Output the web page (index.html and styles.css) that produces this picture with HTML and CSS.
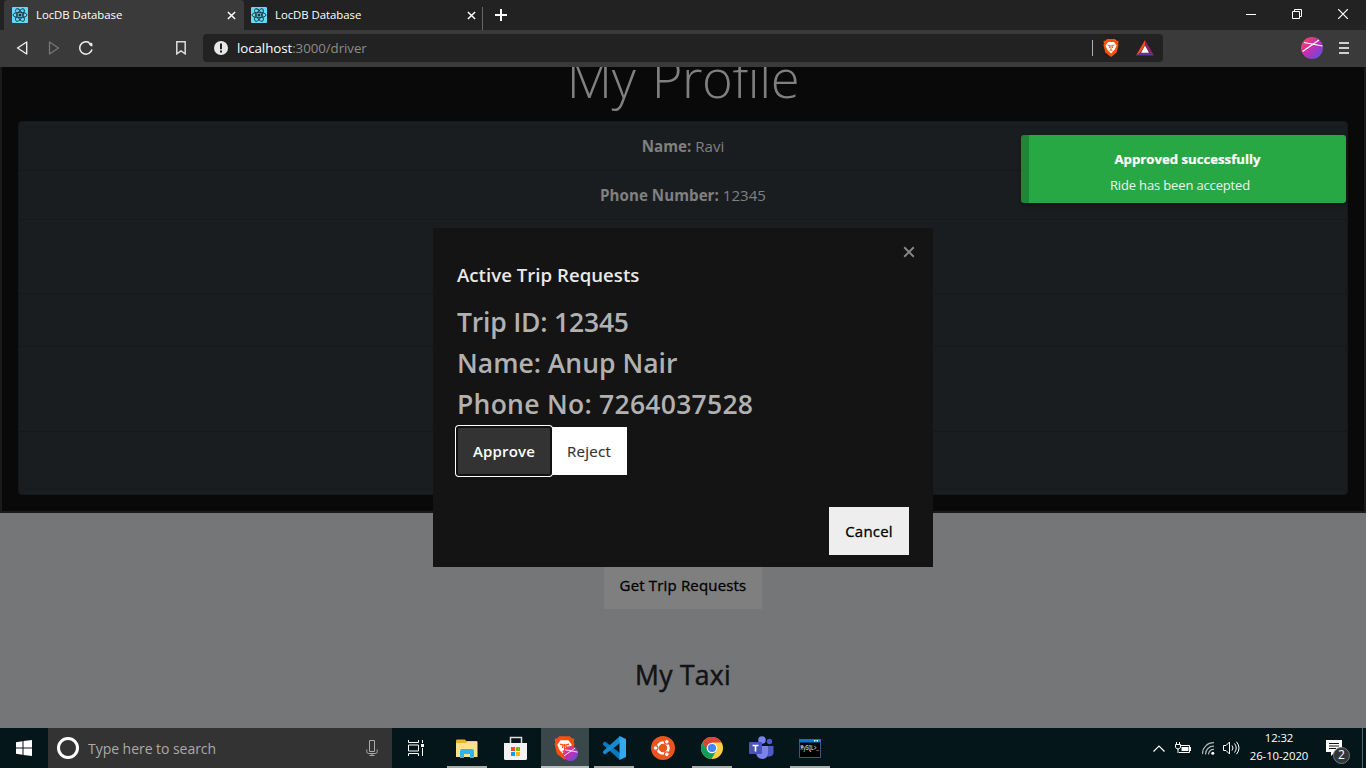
FILE: index.html
```html
<!DOCTYPE html>
<html lang="en">
<head>
<meta charset="utf-8">
<title>LocDB Database</title>
<link rel="stylesheet" href="styles.css">
</head>
<body>
<svg width="0" height="0" class="defs">
  <defs>
    <linearGradient id="orb" x1="0" y1="0" x2="1" y2="1"><stop offset="0" stop-color="#ff4a4a"/><stop offset=".5" stop-color="#c12fb5"/><stop offset="1" stop-color="#4a55e8"/></linearGradient>
    <symbol id="react" viewBox="0 0 16 16"><rect width="16" height="16" rx="1" fill="#61dafb"/><g fill="none" stroke="#20323a" stroke-width=".9"><ellipse cx="8" cy="8" rx="7" ry="2.7"/><ellipse cx="8" cy="8" rx="7" ry="2.7" transform="rotate(60 8 8)"/><ellipse cx="8" cy="8" rx="7" ry="2.7" transform="rotate(120 8 8)"/></g><circle cx="8" cy="8" r="1.5" fill="#20323a"/></symbol>
    <symbol id="x" viewBox="0 0 10 10"><path d="M1 1l8 8M9 1l-8 8" fill="none" stroke="currentColor" stroke-width="1.6"/></symbol>
    <symbol id="lion" viewBox="0 0 16 18"><path d="M4 0h8l1.500 1.500L15.500 2l-.4 3 .5 1-1.900 7.500L8 18l-5.700-4.500L.4 6l.5-1L.5 2l2-.5z" fill="#fb4f0b"/><path d="M5 3h6l2.500 3.500-1.700 4L9.500 13 8 14.500 6.500 13l-2.300-2.500L2.500 6.500z" fill="#fff"/><path d="M4.500 6l2.500.7-.6 2.300M11.500 6L9 6.700l.6 2.300M6.500 11.700L8 11l1.500.7M8 6v5" fill="none" stroke="#fb4f0b" stroke-width=".9"/></symbol>
    <symbol id="orbit" viewBox="0 0 22 22"><circle cx="11" cy="11" r="11" fill="url(#orb)"/><path d="M1.500 14.500L18 3M3 5.500L21.500 9" stroke="#fff" stroke-width="1.200"/></symbol>
  </defs>
</svg>

<header class="browser">
  <div class="tabs">
    <div class="tab tab-active"><svg class="fav"><use href="#react"/></svg><span>LocDB Database</span><svg class="tab-x"><use href="#x"/></svg></div>
    <div class="tab tab-second"><svg class="fav"><use href="#react"/></svg><span>LocDB Database</span><svg class="tab-x"><use href="#x"/></svg></div>
    <svg class="plus" viewBox="0 0 12 12"><path d="M6 0v12M0 6h12" stroke="#fff" stroke-width="2"/></svg>
    <div class="window-buttons">
      <svg viewBox="0 0 10 10"><path d="M0 5.500h10" stroke="#fff"/></svg>
      <svg viewBox="0 0 10 10"><path d="M.5 2.500h7v7h-7zM2.500 2.500v-2h7v7h-2" fill="none" stroke="#fff"/></svg>
      <svg viewBox="0 0 10 10"><path d="M0 0l10 10M10 0L0 10" stroke="#fff" stroke-width="1.200"/></svg>
    </div>
  </div>
  <div class="toolbar">
    <svg class="back" viewBox="0 0 12 14"><path d="M10.700 1v12L1.500 7z" fill="none" stroke="#eee" stroke-width="1.400" stroke-linejoin="round"/></svg>
    <svg class="forward" viewBox="0 0 12 14"><path d="M1.500 1v12L10.500 7z" fill="none" stroke="#777" stroke-width="1.300" stroke-linejoin="round"/></svg>
    <svg class="reload" viewBox="0 0 14 14"><path d="M13 8.500A6.200 6.200 0 1 1 10.300 1.700" fill="none" stroke="#eee" stroke-width="1.500"/><path d="M9 1.500l4.200.5.300 3.500-2.500-.8z" fill="#eee"/></svg>
    <svg class="bookmark" viewBox="0 0 10 14"><path d="M.8.8h8.400v12L5 9.800.8 12.800z" fill="none" stroke="#ddd" stroke-width="1.500"/></svg>
    <div class="address">
      <svg class="info" viewBox="0 0 14 14"><circle cx="7" cy="7" r="7" fill="#e8e8e8"/><path d="M7 2.500v5.700M7 9.600v2" stroke="#222" stroke-width="2"/></svg>
      <span class="url"><b>localhost</b>:3000/driver</span>
      <i class="address-line"></i>
      <svg class="shield"><use href="#lion"/></svg>
      <svg class="bat" viewBox="0 0 18 16"><path d="M9 0L0 15.500l4-2.300L9 5z" fill="#ff4a1c"/><path d="M9 0l9 15.500-4-2.300L9 5z" fill="#962062"/><path d="M0 15.500h18l-4-2.800H4z" fill="#62339b"/><path d="M9 5.500l4 7.200H5z" fill="#fff"/></svg>
    </div>
    <svg class="profile"><use href="#orbit"/></svg>
    <svg class="burger" viewBox="0 0 10 12"><path d="M0 1h10M0 6h10M0 11h10" stroke="#d0d0d0" stroke-width="2"/></svg>
  </div>
</header>

<main class="page">
  <section class="profile-panel">
    <h1>My Profile</h1>
    <ul class="details">
      <li class="row-name"><span><b>Name:</b> Ravi</span></li>
      <li class="row-phone"><span><b>Phone Number:</b> 12345</span></li>
      <li class="row-a"></li><li class="row-b"></li><li class="row-c"></li><li class="row-d"></li>
    </ul>
  </section>
  <button class="get-requests">Get Trip Requests</button>
  <h2 class="taxi">My Taxi</h2>
</main>

<section class="dialog">
  <svg class="dialog-x"><use href="#x"/></svg>
  <h3><span>Active Trip Requests</span></h3>
  <p class="t-id">Trip ID: 12345</p>
  <p class="t-name">Name: Anup Nair</p>
  <p class="t-phone">Phone No: 7264037528</p>
  <div class="choices"><button class="approve">Approve</button><button class="reject">Reject</button></div>
  <div class="actions"><button class="cancel">Cancel</button></div>
</section>

<aside class="toast"><strong>Approved successfully</strong><span>Ride has been accepted</span></aside>

<footer class="taskbar">
  <div class="start"><svg width="16" height="16" viewBox="0 0 16 16" fill="#fff"><path d="M0 2.200l6.500-.9v6.200H0zM7.500 1.100L16 0v7.500H7.500zM0 8.500h6.500v6.200L0 13.800zM7.500 8.500H16V16l-8.500-1.100z"/></svg></div>
  <div class="search">
    <i class="cortana"></i><span>Type here to search</span>
    <svg class="mic" width="12" height="16" viewBox="0 0 12 16" fill="none" stroke="#aaa"><path d="M3.500.5h5v11h-5zM.8 9.500v2c0 1.300.7 2 2 2h6.400c1.300 0 2-.7 2-2v-2M6 13.500v2M3.500 15.500h5"/></svg>
  </div>
  <div class="app"><svg width="17" height="16" viewBox="0 0 17 16" fill="none" stroke="#fff"><path d="M.5 0v2.500h10V0M.5 5h10v6H.5zM.5 16v-2.500h10V16M14.500 0v3M14.500 8v8"/><path d="M13 4h3v3h-3z" fill="#fff" stroke="none"/></svg></div>
  <div class="app open folder"><svg width="22" height="19" viewBox="0 0 22 19"><path d="M0 2q0-1.500 1-1.500h8l1.200 1.500H21V18H0z" fill="#e8b52c"/><path d="M0 4h10l1-1.500h10.500V18H0z" fill="#ffe08c"/><path d="M4 19v-7q0-2 2-2h10q2 0 2 2v7h-4v-4H8v4z" fill="#30b4ee"/></svg></div>
  <div class="app"><svg width="24" height="25" viewBox="0 0 24 25"><path d="M6.500 7V1.500h11V7" fill="none" stroke="#ddd" stroke-width="1.500"/><path d="M0 7h23v15.500q0 1.500-1.500 1.500h-20Q0 24 0 22.500z" fill="#f2f2f2"/><path d="M7 11h4v4H7z" fill="#f25022"/><path d="M12 11h4v4h-4z" fill="#7fba00"/><path d="M7 16h4v4H7z" fill="#00a4ef"/><path d="M12 16h4v4h-4z" fill="#ffb900"/></svg></div>
  <div class="app current"><svg width="24" height="26" viewBox="0 0 24 26"><use href="#lion" width="21" height="24"/><use href="#orbit" x="9" y="10" width="15" height="15"/></svg></div>
  <div class="app open code"><svg width="24" height="24" viewBox="0 0 24 24"><path d="M1 7l2-1.500L18 17v7L1 8.800z" fill="#0879bd"/><path d="M1 17l2 1.500L18 7V0L1 15.200z" fill="#168bd1"/><path d="M17.500 0L24 3v18l-6.500 3z" fill="#32a8ef"/></svg></div>
  <div class="app"><svg width="24" height="24" viewBox="0 0 24 24"><circle cx="12" cy="12" r="12" fill="#e95420"/><circle cx="12" cy="12" r="5.500" fill="none" stroke="#fff" stroke-width="2.600"/><g stroke="#e95420" stroke-width="1.200" fill="#fff"><circle cx="4.600" cy="12" r="2.400"/><circle cx="15.800" cy="5.700" r="2.400"/><circle cx="15.800" cy="18.300" r="2.400"/></g></svg></div>
  <div class="app open chrome"><svg width="22" height="22" viewBox="0 0 22 22"><circle cx="11" cy="11" r="11" fill="#ffcd40"/><path d="M1.500 5.500A11 11 0 0 1 20.500 5.500H11L6 13.500z" fill="#db4437"/><path d="M1.500 5.500A11 11 0 0 0 10.500 22l5-8.500h-9z" fill="#109d58"/><circle cx="11" cy="11" r="5.300" fill="#fff"/><circle cx="11" cy="11" r="4.100" fill="#4285f4"/></svg></div>
  <div class="app teams"><svg width="25" height="24" viewBox="0 0 25 24"><circle cx="20.500" cy="5.500" r="2.700" fill="#5059c9"/><path d="M16 10h8.500v6.500q0 3.500-4 4H16z" fill="#5059c9"/><circle cx="13" cy="4" r="3.800" fill="#7b83eb"/><path d="M7 10h12v7q0 5.500-5.500 6-6-.5-6.500-6z" fill="#7b83eb"/><rect y="6" width="13" height="12" rx="1" fill="#4b53bc"/><path d="M3.500 9.500h6M6.500 9.500v6" stroke="#fff" stroke-width="1.700"/></svg></div>
  <div class="app open console"><svg width="22" height="19" viewBox="0 0 22 19"><path d="M.5.500h21v18H.5z" fill="#000" stroke="#3a5779"/><path d="M0 0h22v3.500H0z" fill="#0b76cf"/><path d="M15 1h1.500v1.500H15zM17.500 1H19v1.500h-1.500z" fill="#fff"/><path d="M20 1h1.500v1.500H20z" fill="#e44"/><text x="1.500" y="10.500" textLength="18.500" lengthAdjust="spacingAndGlyphs">MySQL&gt;_</text></svg></div>
  <div class="tray">
    <svg class="up" viewBox="0 0 12 7"><path d="M.5 6.500L6 1l5.500 5.500" fill="none" stroke="#fff" stroke-width="1.200"/></svg>
    <svg class="power" viewBox="0 0 17 12"><path d="M5.500 3.500h9v7H4M15.500 5v4M1.500 0v3M4.500 0v3M3 6v5" fill="none" stroke="#fff"/><path d="M.5 2.500h5v3L3.500 7h-1L.5 5.500z" fill="none" stroke="#fff"/><path d="M6.500 5h7v4h-7z" fill="#fff"/></svg>
    <svg class="wifi" viewBox="0 0 13 13"><path d="M.5 12A11 11 0 0 1 12 .7M3.500 12.500A8 8 0 0 1 12 4.200M6.500 12.500A5 5 0 0 1 12 7.500" fill="none" stroke="#aeb5b6" stroke-width="1.200"/><circle cx="10.800" cy="11.300" r="1.500" fill="#fff"/></svg>
    <svg class="volume" viewBox="0 0 17 14"><path d="M.5 4.500h2.500L6.500 1v12L3 9.500H.5z" fill="none" stroke="#fff"/><path d="M9 4.500q2 2.500 0 5M11.500 2.500q3.500 4.500 0 9M13.500.8q5 6.200 0 12.400" fill="none" stroke="#fff"/></svg>
    <div class="clock"><span>12:32</span><span class="date">26-10-2020</span></div>
    <div class="notice"><svg width="16" height="16" viewBox="0 0 16 16"><path d="M0 0h16v12H9l-4 4v-4H0z" fill="#fff"/><path d="M3 3.500h10M3 6h10M3 8.500h7" stroke="#06181c"/></svg><span>2</span></div>
    <i class="peek"></i>
  </div>
</footer>
</body>
</html>
```
FILE: styles.css
```css
* { box-sizing: border-box; }
body { margin: 0; width: 1366px; height: 768px; overflow: hidden; position: relative; background: #757678; font-family: "Open Sans", "Noto Sans", sans-serif; font-size: 15px; display: flex; flex-direction: column; }
svg { display: block; flex: none; }
.defs { position: absolute; }
h1, h2, h3, p, ul { margin: 0; padding: 0; font-weight: 400; }
button { border: 0; border-radius: 0; padding: 0; font: inherit; white-space: nowrap; }
span { white-space: nowrap; }

.browser { flex: none; height: 67px; background: #3a3a3a; }
.tabs { display: flex; height: 30px; background: #222; padding-left: 4px; color: #fff; font-size: 11.4px; }
.tab { display: flex; align-items: center; height: 30px; padding-left: 8px; }
.tab span { margin-top: -2px; letter-spacing: -.05px; }
.tab-active { width: 240px; background: #3a3a3a; border-radius: 4px 4px 0 0; }
.tab-second { width: 239px; padding-left: 7px; background: linear-gradient(#666, #666) right bottom / 1px 23px no-repeat; }
.fav { width: 16px; height: 16px; margin-right: 8px; }
.tab-x { width: 9px; height: 9px; margin-left: auto; }
.tab-active .tab-x { margin-right: 8px; }
.tab-second .tab-x { margin-right: 7px; }
.plus { width: 12px; height: 12px; margin: 9px 0 0 12px; }
.window-buttons { display: flex; gap: 36px; margin: 9px 18px 0 auto; }
.window-buttons svg { width: 10px; height: 10px; }
.toolbar { height: 37px; display: flex; align-items: center; padding: 0 0 1px 16px; }
.back { width: 12px; height: 14px; }
.forward { width: 12px; height: 14px; margin-left: 20px; }
.reload { width: 14px; height: 14px; margin-left: 19px; }
.bookmark { width: 10px; height: 14px; margin-left: 83px; }
.address { width: 960px; height: 28px; margin-left: 17px; background: #222; border-radius: 4px; display: flex; align-items: center; padding: 0 9px 0 11px; }
.info { width: 14px; height: 14px; }
.url { margin-left: 9px; color: #8c8c8c; font-size: 13.3px; letter-spacing: -.06px; }
.url b { color: #fff; font-weight: 400; }
.address-line { width: 1px; height: 16px; background: #b0b0b0; margin-left: auto; }
.shield { width: 16px; height: 18px; margin-left: 10px; }
.bat { width: 18px; height: 16px; margin-left: 17px; }
.profile { width: 22px; height: 22px; margin-left: 138px; }
.burger { width: 10px; height: 12px; margin-left: 16px; }

.page { height: 661px; overflow: hidden; display: flex; flex-direction: column; align-items: center; }
.profile-panel { width: 1366px; height: 446px; flex: none; background: #090909; border: 2px solid #1a1a1a; border-top: 0; padding: 0 16px; }
h1 { height: 54px; line-height: 22px; text-align: center; color: #808080; font-size: 52.5px; font-weight: 300; letter-spacing: -.4px; word-spacing: 3px; }
.details { list-style: none; height: 374px; background: #1a1d20; border: 1px solid #15181b; border-radius: 4px; color: #808080; overflow: hidden; font-size: 15.100px; }
.details li { border-bottom: 1px solid #15181a; display: flex; justify-content: center; align-items: center; }
.details b { letter-spacing: .05px; }
.row-name, .row-phone { height: 49px; }
.row-a { height: 74px; } .row-b { height: 53px; } .row-c { height: 85px; }
.details .row-d { height: 62px; border: 0; }
.get-requests { flex: none; width: 158px; height: 48px; margin-top: 48px; background: #7f7f7f; color: #000; letter-spacing: .17px; -webkit-text-stroke: .3px #000; }
.taxi { line-height: 36px; margin-top: 48px; color: #111315; font-size: 26.5px; letter-spacing: .3px; -webkit-text-stroke: .5px #111315; }

.dialog { position: absolute; left: 433px; top: 228px; width: 500px; height: 339px; padding: 32px 24px 12px; background: #141414; color: #b1b1b1; }
.dialog-x { position: absolute; right: 18px; top: 18px; width: 12px; height: 12px; color: #888; }
h3 { height: 42px; line-height: 29px; font-size: 18.6px; font-weight: 600; color: #e9e9e9; letter-spacing: .03px; }
.dialog p { height: 41px; line-height: 41px; font-size: 26.5px; font-weight: 600; white-space: nowrap; }
.dialog .t-id { letter-spacing: -.2px; }
.dialog .t-phone { letter-spacing: .27px; }
.choices { display: flex; margin-top: 2px; }
.choices button { height: 48px; }
.approve { position: relative; width: 94px; background: #333; color: #fff; font-weight: 600; letter-spacing: .15px; border: 1px solid #111; border-radius: 2px; box-shadow: 0 0 0 1px #111, 0 0 0 2px #fff; }
.reject { width: 76px; background: #fff; color: #333; letter-spacing: .3px; -webkit-text-stroke: .2px #333; }
.actions { display: flex; justify-content: flex-end; margin-top: 32px; }
.cancel { width: 80px; height: 48px; background: #eee; color: #000; letter-spacing: .2px; -webkit-text-stroke: .3px #000; }

.toast { position: absolute; left: 1021px; top: 135px; width: 325px; height: 68px; border-left: 8px solid #208637; border-radius: 3px; background: #28a745; box-shadow: 1px 3px 4px #0004; color: #fff; display: flex; flex-direction: column; align-items: center; padding: 15px 0 0; }
.toast strong { font-size: 13.2px; line-height: 18px; -webkit-text-stroke: .2px #fff; }
.toast span { margin: 8px 15px 0 0; font-size: 13px; letter-spacing: -.15px; line-height: 18px; color: #e7f6ea; }

.taskbar { height: 40px; display: flex; background: #04161a; color: #fff; }
.start { width: 48px; display: flex; align-items: center; justify-content: center; }
.search { width: 344px; background: #333; display: flex; align-items: center; padding: 0 14px 0 9px; color: #aaa; font-size: 14px; letter-spacing: -.04px; }
.cortana { width: 22px; height: 22px; border: 3px solid #fff; border-radius: 50%; margin-right: 9px; }
.mic { margin-left: auto; }
.app { width: 49px; display: flex; align-items: center; justify-content: center; position: relative; }
.open, .current { background: linear-gradient(#aaa, #aaa) center bottom / 40px 2px no-repeat; }
.folder { margin-left: 1px; }
.teams { padding-left: 2px; }
.current { background: linear-gradient(#b8bcbd, #b8bcbd) center bottom / 48px 2px no-repeat, linear-gradient(#3a484c, #3a484c) center / 48px 40px no-repeat; }
.current svg { margin-left: 3px; margin-top: 1px; }
.console text { fill: #fff; font: 6.5px "Liberation Mono", monospace; }
.tray { margin-left: auto; display: flex; align-items: center; }
.up { width: 12px; height: 7px; }
.power { width: 17px; height: 12px; margin-left: 10px; }
.wifi { width: 13px; height: 13px; margin-left: 10px; }
.volume { width: 17px; height: 14px; margin-left: 8px; }
.clock { width: 60px; margin-left: 9px; display: flex; flex-direction: column; align-items: center; font-size: 11.4px; line-height: 18px; margin-top: -2px; letter-spacing: -.1px; }
.notice { position: relative; width: 16px; height: 16px; margin-left: 17px; }
.notice span { position: absolute; left: 7px; top: 7px; width: 17px; height: 17px; border: 1px solid #777; border-radius: 50%; background: #30373a; font-size: 12px; line-height: 14px; text-align: center; }
.peek { width: 1px; height: 40px; background: #586669; margin: 0 3px 0 20px; }
```
